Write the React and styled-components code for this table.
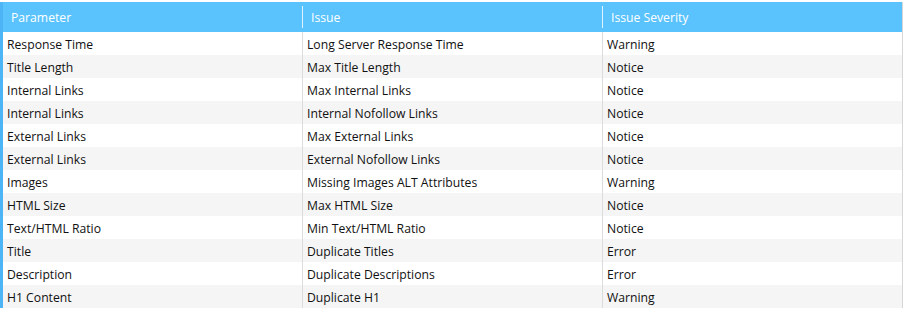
import React from 'react'
import styled, { createGlobalStyle } from 'styled-components'

const GlobalStyle = createGlobalStyle`
  html, body { margin: 0; padding: 0; background: #ffffff; }
  body { font-family: "Open Sans", "Noto Sans", Arial, sans-serif; }
`

const Table = styled.div`
  margin-top: 2px;
  width: 903px;
  border-left: 3px solid #4db4f5;
  border-right: 1px solid #d6d6d6;
  box-sizing: border-box;
`

const Row = styled.div`
  display: grid;
  grid-template-columns: 299px 300px 300px;
  height: ${({ header }) => (header ? '30px' : '23px')};
  background: ${({ header, alt }) => (header ? '#5ac3fd' : alt ? '#f5f5f5' : '#ffffff')};
  color: ${({ header }) => (header ? '#ffffff' : '#111111')};
`

const Cell = styled.div`
  display: flex;
  align-items: center;
  padding-left: 4px;
  padding-top: 1px;
  font-size: 12.2px;
  white-space: nowrap;
  border-left: ${({ first }) => (first ? 'none' : '1px solid #dcdcdc')};
  ${({ header, first }) => header && `
    border-left-color: transparent;
    position: relative;
    padding-left: ${first ? '8px' : '8px'};
  `}
`

const HeaderDivider = styled.span`
  position: absolute;
  left: -1px;
  top: 4px;
  bottom: 4px;
  width: 1px;
  background: rgba(255, 255, 255, 0.8);
`

const rows = [
  ['Response Time', 'Long Server Response Time', 'Warning'],
  ['Title Length', 'Max Title Length', 'Notice'],
  ['Internal Links', 'Max Internal Links', 'Notice'],
  ['Internal Links', 'Internal Nofollow Links', 'Notice'],
  ['External Links', 'Max External Links', 'Notice'],
  ['External Links', 'External Nofollow Links', 'Notice'],
  ['Images', 'Missing Images ALT Attributes', 'Warning'],
  ['HTML Size', 'Max HTML Size', 'Notice'],
  ['Text/HTML Ratio', 'Min Text/HTML Ratio', 'Notice'],
  ['Title', 'Duplicate Titles', 'Error'],
  ['Description', 'Duplicate Descriptions', 'Error'],
  ['H1 Content', 'Duplicate H1', 'Warning'],
]

const headers = ['Parameter', 'Issue', 'Issue Severity']

export default function App() {
  return (
    <>
      <GlobalStyle />
      <Table>
        <Row header>
          {headers.map((h, i) => (
            <Cell key={h} header first={i === 0}>
              {i > 0 && <HeaderDivider />}
              {h}
            </Cell>
          ))}
        </Row>
        {rows.map((r, i) => (
          <Row key={i} alt={i % 2 === 1}>
            {r.map((c, j) => (
              <Cell key={j} first={j === 0}>{c}</Cell>
            ))}
          </Row>
        ))}
      </Table>
    </>
  )
}
